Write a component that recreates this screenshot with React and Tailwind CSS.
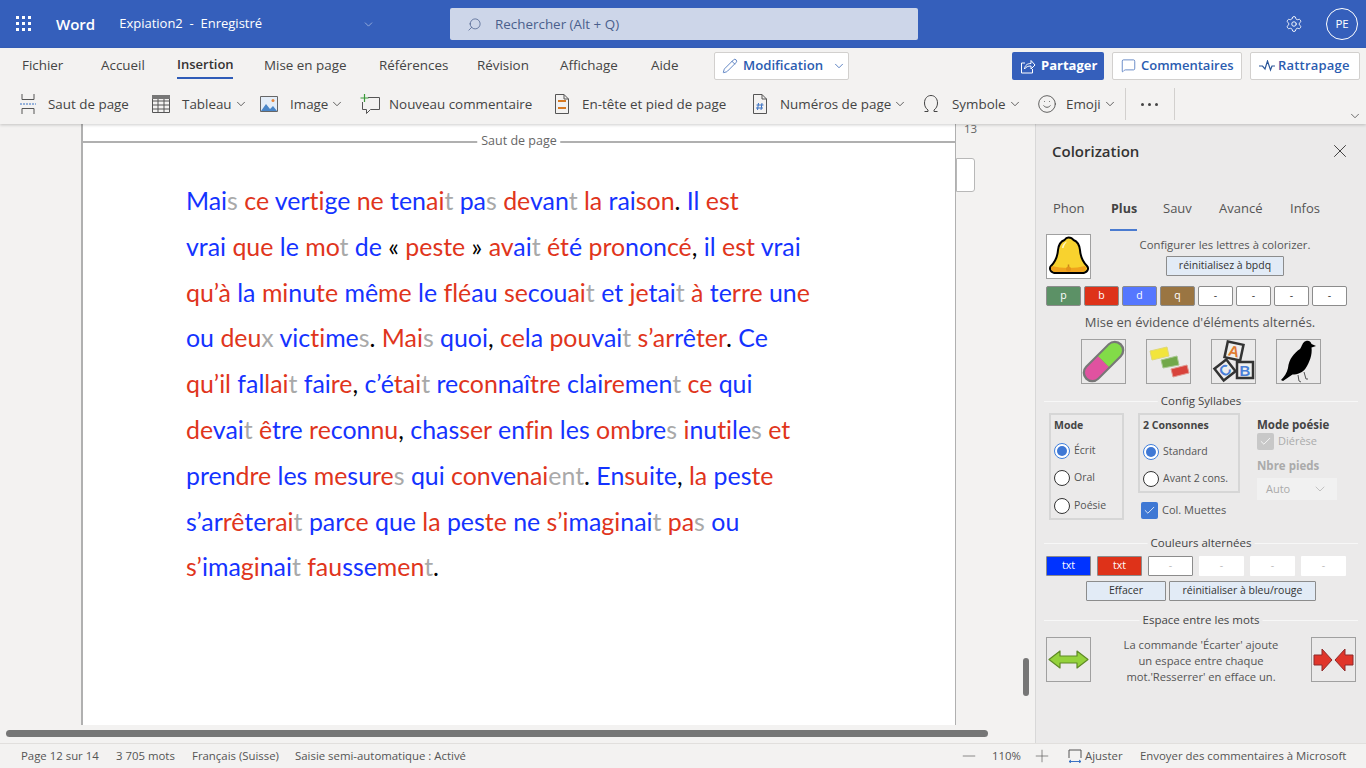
import React from 'react';
import { Search, Settings, Pencil, ChevronDown, MessageSquare, Smile, X, Minus, Plus, Check } from 'lucide-react';

const ui = "font-['Open_Sans',sans-serif]";

// each line: segments split by |, the first char of a segment is its colour
const LINES = [
  "bMai|gs |rce |bver|rti|bge |rne |bten|rai|gt |bpa|gs |rde|bvan|gt |rla |brai|rson|k. |bIl |rest",
  "bvrai |rque |ble |rmo|gt |bde |k« |rpeste |k» |rav|bai|gt |rét|bé |rpro|bnon|rcé|k, |bil |rest |bvrai",
  "rqu’à |bla |rmi|bnu|rte |bmê|rme |ble |rfl|ré|bau |rse|bcou|rai|gt |bet |rje|btai|gt |rà |bte|rrre |bun|re",
  "bou |rdeu|gx |bvic|rti|bme|gs|k. |rMai|gs |bquoi|k, |rce|bla |rpou|bvai|gt |rs’ar|brê|rter|k. |bCe",
  "rqu’il |bfal|rlai|gt |bfai|rre|k, |bc’é|rtai|gt |bre|rcon|bnaî|rtre |bclai|rre|bmen|gt |rce |bqui",
  "rde|bvai|gt |rê|btre |rre|bcon|rnu|k, |bchas|rser |ben|rfin |bles |rom|bbre|gs |ri|bnu|rti|ble|gs |ret",
  "bpren|rdre |bles |rme|bsu|rre|gs |bqui |rcon|bve|rnai|gent|k. |bEn|rsu|bite|k, |rla |bpes|rte",
  "bs’ar|rrê|bte|rrai|gt |bpar|rce |bque |rla |bpes|rte |bne |rs’i|bma|rgi|bnai|gt |rpa|gs |bou",
  "rs’|bima|rgi|bnai|gt |rfau|bsse|rmen|gt|k.",
];

const COLORS = { b: 'text-[#1433ff]', r: 'text-[#e0351c]', g: 'text-[#a9a9a9]', k: 'text-black' };

function Line({ text }) {
  return (
    <p className="h-[45.8px] leading-[45.8px] whitespace-pre [font-variant-ligatures:none]">
      {text.split('|').map((s, i) => (
        <span key={i} className={COLORS[s[0]]}>{s.slice(1)}</span>
      ))}
    </p>
  );
}

const Chevron = ({ className = '' }) => <ChevronDown size={14} strokeWidth={1.3} className={className} />;

function Cmd({ icon, label, chevron, width, gap }) {
  return (
    <div className="flex items-center shrink-0" style={{ width }}>
      {icon}
      <span style={{ marginLeft: gap }} className="whitespace-nowrap">{label}</span>
      {chevron && <Chevron className="ml-[2px] text-[#333]" />}
    </div>
  );
}

const PageBreakIcon = () => (
  <svg width="16" height="20" viewBox="0 0 16 20" fill="none" stroke="#555" className="shrink-0">
    <path d="M2 0v5.5h12V0M2 20v-5.5h12V20" />
    <path d="M0 10h16" stroke="#3a72c4" strokeDasharray="2 1" />
  </svg>
);
const TableIcon = () => (
  <svg width="18" height="18" viewBox="0 0 18 18" fill="none" stroke="#555" className="shrink-0">
    <path d="M.5.5h17v17H.5zM.5 6h17M.5 10h17M.5 14h17M6 4v14M12 4v14" />
    <path d="M0 0h18v4H0z" fill="#777" stroke="none" />
  </svg>
);
const ImageIcon = () => (
  <svg width="18" height="16" viewBox="0 0 18 16" className="shrink-0">
    <path d="M.5.5h17v15H.5z" fill="#e3edf8" stroke="#666" />
    <circle cx="13" cy="4.5" r="1.5" fill="#e8863a" />
    <path d="M1 15l5-7 4 5 3-3 4 5z" fill="#4a86c8" />
  </svg>
);
const CommentIcon = () => (
  <svg width="20" height="21" viewBox="0 0 20 21" fill="none" className="shrink-0">
    <path d="M8 3.500h11.500v12h-9l-4 4v-4h-4V8" stroke="#555" />
    <path d="M4.500 0v8M.5 4h8" stroke="#3a9a3a" strokeWidth="1.200" />
  </svg>
);
const HeaderIcon = () => (
  <svg width="14" height="20" viewBox="0 0 14 20" fill="none" className="shrink-0">
    <path d="M.5.500h8.500l4.500 4.500v14.500H.5zM9 .5V5h4.500" stroke="#555" />
    <path d="M3 6h8v2H3zM3 13h8v2H3z" fill="#d87a22" />
  </svg>
);
const NumberIcon = () => (
  <svg width="14" height="20" viewBox="0 0 14 20" fill="none" className="shrink-0">
    <path d="M.5.500h8.500l4.500 4.500v14.500H.5zM9 .5V5h4.500" stroke="#555" />
    <path d="M5.500 9l-1 7M9 9l-1 7M3.500 11h7M3 14h7" stroke="#3a72c4" />
  </svg>
);
const OmegaIcon = () => (
  <svg width="14" height="17" viewBox="0 0 14 17" fill="none" stroke="#444" className="shrink-0">
    <path d="M.5 16.500h3.500v-1.500C1.800 13.500.5 11 .5 8c0-4.500 2.800-7.500 6.500-7.500s6.500 3 6.500 7.500c0 3-1.300 5.500-3.500 7v1.500h3.500" />
  </svg>
);

const Waffle = () => (
  <svg width="16" height="16" viewBox="0 0 16 16" fill="#fff">
    {[1, 7, 13].map((y) => [1, 7, 13].map((x) => <rect key={`${x}-${y}`} x={x - 1} y={y - 1} width="3" height="3" />))}
  </svg>
);

const ShareIcon = () => (
  <svg width="16" height="16" viewBox="0 0 16 16" fill="none" stroke="#fff" className="shrink-0">
    <path d="M5 5H1.500v10h11v-4" />
    <path d="M4.500 11c.5-4 3-5.500 6.500-5.500V2.500l4 4.500-4 4V8c-3 0-5 .8-6.500 3z" />
  </svg>
);
const CatchupIcon = () => (
  <svg width="16" height="12" viewBox="0 0 16 12" fill="none" stroke="#2b579a" strokeWidth="1.200" className="shrink-0">
    <path d="M0 6h3.500l2.500 3 2.500-8 3 9 1.500-4H16" />
  </svg>
);

const Bell = () => (
  <svg width="43" height="43" viewBox="0 0 43 43">
    <path d="M21.500 2.500c2.500 0 4 1 5 2.500 4 1.500 6 5.500 6.500 10 .5 7 2 11 7 16 2.500 3 0 7-5 7H9c-5 0-7.500-4-5-7 5-5 6.500-9 7-16 .5-4.500 2.500-8.500 6.500-10 1-1.500 2.500-2.500 4-2.500z" fill="#f8d22e" stroke="#000" strokeWidth="2" strokeLinejoin="round" />
    <path d="M5 31c9 2.500 24 2.500 33 0 2.500 3 0 6-4 6H9c-4 0-6.500-3-4-6z" fill="#f0a31c" />
    <path d="M21.500 29.500v3" stroke="#c9851a" strokeWidth="1.500" />
    <circle cx="21.500" cy="34" r="2.500" fill="#e3931a" />
    <path d="M15 13c.3-3 2-5.500 5-6.500-1.500 2-3 4-3.500 6.500z" fill="#fff7c0" />
  </svg>
);
const Pill = () => (
  <svg width="43" height="43" viewBox="0 0 43 43">
    <g transform="rotate(-45 21.500 21.500)">
      <rect x="-4" y="12" width="51" height="19" rx="9.500" fill="#777" />
      <path d="M21.500 14H6a7.500 7.500 0 000 15h15.500z" fill="#e052a0" />
      <path d="M21.500 14H37a7.500 7.500 0 010 15H21.500z" fill="#82dc48" />
    </g>
  </svg>
);
const Bricks = () => (
  <svg width="43" height="43" viewBox="0 0 43 43">
    <path d="M3 11l17-4 2 9-17 4z" fill="#f2e53c" stroke="#e0d878" />
    <path d="M14 20l16-4 2 9-16 3z" fill="#72a84a" stroke="#a8c890" />
    <path d="M24 29l16-4 2 8-16 4z" fill="#d8433c" stroke="#e09890" />
  </svg>
);
const Block = ({ x, y, r, letter, color, size }) => (
  <g transform={`translate(${x} ${y}) rotate(${r})`}>
    <rect x={-size / 2} y={-size / 2} width={size} height={size} fill="#eee" stroke="#333" strokeWidth="2.500" />
    <text textAnchor="middle" y="5.500" fontSize="15" fontWeight="700" fontFamily="Liberation Sans, sans-serif" fill={color}>{letter}</text>
  </g>
);
const Blocks = () => (
  <svg width="43" height="43" viewBox="0 0 43 43">
    <Block x={22} y={11} r={12} letter="A" color="#e07a30" size={16} />
    <Block x={13} y={30} r={-38} letter="C" color="#4a7fd8" size={15} />
    <Block x={33} y={30} r={0} letter="B" color="#4a7fd8" size={16} />
  </svg>
);
const Bird = () => (
  <svg width="43" height="43" viewBox="0 0 43 43">
    <path d="M29 1c3-1 5 1 5.500 3L39 6l-4.500 1.500c1 7-2 15-6 21-3 4-8 6-13 6L6 41l-2-1c3-3 6-7 7-12 1-9 6-15 12-19 2-2 2-7 6-8z" fill="#000" />
    <path d="M21 35l1 6M22 41l2 1M27 32l2 7h2" stroke="#555" fill="none" />
  </svg>
);
const ArrowsOut = () => (
  <svg width="41" height="19" viewBox="0 0 41 19">
    <path d="M1 9.500L12 1v5h17V1l11 8.500L29 18v-5H12v5z" fill="#94d23c" stroke="#5f8a26" strokeWidth="1.200" strokeLinejoin="round" />
  </svg>
);
const ArrowsIn = () => (
  <svg width="41" height="24" viewBox="0 0 41 24">
    <path d="M1 7h8V1l10 11L9 23v-6H1z" fill="#e0352a" stroke="#8f2a2a" strokeWidth="1" />
    <path d="M40 7h-8V1L22 12l10 11v-6h8z" fill="#e0352a" stroke="#8f2a2a" strokeWidth="1" />
  </svg>
);

const IconBtn = ({ children, className = '' }) => (
  <div className={`w-[45px] h-[45px] shrink-0 border border-[#a0a0a0] flex items-center justify-center ${className}`}>{children}</div>
);

function Divider({ label, className = '' }) {
  return (
    <div className={`relative h-[1px] bg-[#f7f7f7] mx-[8px] ${className}`}>
      <span className="absolute left-1/2 -translate-x-1/2 -top-[9px] bg-[#ebeaea] px-[3px] leading-[18px] text-[11.500px] text-[#444] whitespace-nowrap">{label}</span>
    </div>
  );
}

function Radio({ checked, label, className = '' }) {
  return (
    <div className={`flex items-center h-[17px] ${className}`}>
      {checked ? (
        <span className="w-[16px] h-[16px] rounded-full border border-[#3f7fdc] bg-white flex items-center justify-center">
          <span className="w-[10px] h-[10px] rounded-full bg-[#3f78d4]" />
        </span>
      ) : (
        <span className="w-[16px] h-[16px] rounded-full border border-[#333] bg-white" />
      )}
      <span className="ml-[4px] text-[10.500px] text-[#555]">{label}</span>
    </div>
  );
}

const TinyBtn = ({ children, className = '' }) => (
  <div className={`h-[20px] border border-[#8c8c8c] bg-[#e2ebf6] rounded-[1px] flex items-center justify-center text-[10.500px] text-[#333] ${className}`}>{children}</div>
);

function Swatch({ label, className }) {
  return (
    <div className={`w-[35px] h-[20px] rounded-[2px] border border-[#8c8c8c] flex items-center justify-center text-[10.500px] ${className}`}>{label}</div>
  );
}

function AltSwatch({ label, className }) {
  return (
    <div className={`w-[45px] h-[20px] rounded-[1px] flex items-center justify-center text-[10.500px] ${className}`}>{label}</div>
  );
}

function Pane() {
  return (
    <aside className="w-[331px] shrink-0 h-full bg-[#ebeaea] border-l border-[#d8d8d8] text-[#444] overflow-hidden">
      <div className="flex items-center justify-between h-[20px] mt-[17px] pl-[16px] pr-[15px]">
        <span className="text-[15px] font-semibold text-[#333]">Colorization</span>
        <X size={22} strokeWidth={1} className="text-[#333]" />
      </div>
      <div className="flex mt-[38px] h-[20px] items-center text-[13px] text-[#555] pl-[17px]">
        <span className="w-[58px]">Phon</span>
        <span className="w-[52px] font-bold text-[12.500px] text-[#444]">Plus</span>
        <span className="w-[56px]">Sauv</span>
        <span className="w-[71px]">Avancé</span>
        <span>Infos</span>
      </div>
      <div className="w-[27px] h-[2px] bg-[#4a7bd0] ml-[74px] mt-[10px]" />

      <div className="flex mt-[3px] pl-[10px]">
        <IconBtn className="bg-white"><Bell /></IconBtn>
        <div className="w-[268px] flex flex-col items-center mt-[3px]">
          <span className="text-[11.300px] leading-[15px] text-[#555]">Configurer les lettres à colorizer.</span>
          <TinyBtn className="w-[118px] mt-[4px]">réinitialisez à bpdq</TinyBtn>
        </div>
      </div>

      <div className="flex gap-[3px] mt-[7px] pl-[10px]">
        <Swatch label="p" className="bg-[#5c9166] text-white" />
        <Swatch label="b" className="bg-[#de3219] text-white" />
        <Swatch label="d" className="bg-[#5577ff] text-white" />
        <Swatch label="q" className="bg-[#9a7542] text-white" />
        <Swatch label="-" className="bg-white text-[#333]" />
        <Swatch label="-" className="bg-white text-[#333]" />
        <Swatch label="-" className="bg-white text-[#333]" />
        <Swatch label="-" className="bg-white text-[#333]" />
      </div>

      <p className="text-center text-[13px] leading-[16px] mt-[8px] text-[#555] ml-[-1px] w-[330px]">Mise en évidence d'éléments alternés.</p>

      <div className="flex gap-[20px] mt-[9px] pl-[45px]">
        <IconBtn><Pill /></IconBtn>
        <IconBtn><Bricks /></IconBtn>
        <IconBtn><Blocks /></IconBtn>
        <IconBtn><Bird /></IconBtn>
      </div>

      <Divider label="Config Syllabes" className="mt-[17px]" />

      <div className="flex mt-[11px] pl-[13px] h-[108px] items-start">
        <div className="w-[75px] h-[107px] border-2 border-[#d6d6d6] pl-[3px] pt-[3px]">
          <div className="text-[10.500px] font-bold leading-[15px] text-[#444]">Mode</div>
          <Radio checked label="Écrit" className="mt-[9px]" />
          <Radio label="Oral" className="mt-[10px]" />
          <Radio label="Poésie" className="mt-[11px]" />
        </div>
        <div className="ml-[14px] w-[102px]">
          <div className="h-[80px] border-2 border-[#d6d6d6] pl-[3px] pt-[3px]">
            <div className="text-[10.500px] font-bold leading-[15px] text-[#444]">2 Consonnes</div>
            <Radio checked label="Standard" className="mt-[10px]" />
            <Radio label="Avant 2 cons." className="mt-[10px]" />
          </div>
          <div className="flex items-center mt-[9px] ml-[3px]">
            <span className="w-[17px] h-[17px] rounded-[2px] bg-[#3f78d4] flex items-center justify-center">
              <Check size={13} strokeWidth={1.500} className="text-white" />
            </span>
            <span className="ml-[4px] text-[11px] text-[#555]">Col. Muettes</span>
          </div>
        </div>
        <div className="ml-[17px] mt-[4px]">
          <div className="text-[11.500px] font-bold leading-[15px] text-[#444]">Mode poésie</div>
          <div className="flex items-center mt-[1px]">
            <span className="w-[17px] h-[17px] rounded-[2px] bg-[#c8c8c8] flex items-center justify-center">
              <Check size={13} strokeWidth={1.500} className="text-white" />
            </span>
            <span className="ml-[4px] text-[11px] text-[#aaa]">Diérèse</span>
          </div>
          <div className="text-[11.500px] font-bold leading-[15px] text-[#aaa] mt-[8px]">Nbre pieds</div>
          <div className="mt-[5px] w-[80px] h-[22px] bg-[#f1f1f1] flex items-center justify-between pl-[9px] pr-[9px] text-[11px] text-[#aaa]">
            <span>Auto</span>
            <ChevronDown size={16} strokeWidth={1} />
          </div>
        </div>
      </div>

      <Divider label="Couleurs alternées" className="mt-[22px]" />

      <div className="flex gap-[6px] mt-[12px] pl-[10px]">
        <AltSwatch label="txt" className="bg-[#0033ff] text-white border border-[#8c8c8c]" />
        <AltSwatch label="txt" className="bg-[#de3219] text-white border border-[#8c8c8c]" />
        <AltSwatch label="-" className="bg-white text-[#bbb] border border-[#8c8c8c]" />
        <AltSwatch label="-" className="bg-white text-[#bbb]" />
        <AltSwatch label="-" className="bg-white text-[#bbb]" />
        <AltSwatch label="-" className="bg-white text-[#bbb]" />
      </div>

      <div className="flex gap-[3px] mt-[5px] pl-[50px]">
        <TinyBtn className="w-[80px]">Effacer</TinyBtn>
        <TinyBtn className="w-[147px]">réinitialiser à bleu/rouge</TinyBtn>
      </div>

      <Divider label="Espace entre les mots" className="mt-[19px]" />

      <div className="flex mt-[16px] pl-[10px]">
        <IconBtn><ArrowsOut /></IconBtn>
        <p className="w-[220px] text-center text-[11.200px] leading-[16px] text-[#555]">
          La commande 'Écarter' ajoute<br />un espace entre chaque<br />mot.'Resserrer' en efface un.
        </p>
        <IconBtn><ArrowsIn /></IconBtn>
      </div>
    </aside>
  );
}

export default function App() {
  return (
    <div className={`w-[1366px] h-[768px] overflow-hidden flex flex-col bg-[#f3f2f1] text-[#333] ${ui}`}>
      {/* title bar */}
      <header className="h-[48px] shrink-0 bg-[#355fbb] flex items-center text-white relative">
        <div className="ml-[16px]"><Waffle /></div>
        <span className="ml-[24px] text-[15px] font-semibold">Word</span>
        <span className="ml-[24px] text-[13px] whitespace-pre">Expiation2  -  Enregistré</span>
        <ChevronDown size={13} strokeWidth={1.200} className="ml-[100px] text-[#c4d0ea]" />
        <div className="ml-[75px] w-[468px] h-[32px] bg-[#cdd6e9] rounded-[2px] flex items-center pl-[17px] text-[#4a5f8c] text-[13.400px]">
          <Search size={15} strokeWidth={1.200} className="-scale-x-100" />
          <span className="ml-[13px]">Rechercher (Alt + Q)</span>
        </div>
        <Settings size={18} strokeWidth={1.200} className="ml-[367px]" />
        <div className="ml-[23px] w-[32px] h-[32px] rounded-full border border-white flex items-center justify-center text-[11.500px]">PE</div>
      </header>

      {/* ribbon */}
      <div className="h-[76px] shrink-0 bg-[#f3f2f1] shadow-[0_1px_3px_rgba(0,0,0,0.2)] relative z-10 text-[13.400px] text-[#444]">
        <div className="h-[36px] flex items-center pl-[22px] pb-[2px] relative">
          <span className="w-[79px]">Fichier</span>
          <span className="w-[76px]">Accueil</span>
          <span className="w-[87px] relative font-semibold text-[13px] text-[#333]">
            Insertion
            <span className="absolute left-0 w-[56px] top-[22px] h-[2px] bg-[#2f5cb8]" />
          </span>
          <span className="w-[115px]">Mise en page</span>
          <span className="w-[98px]">Références</span>
          <span className="w-[83px]">Révision</span>
          <span className="w-[91px]">Affichage</span>
          <span className="w-[63px]">Aide</span>
          <div className="w-[135px] h-[28px] mt-[1px] bg-white border border-[#d2d0ce] rounded-[2px] flex items-center pl-[7px] text-[#2b5cb0] font-semibold text-[13.200px]">
            <Pencil size={16} strokeWidth={1.100} />
            <span className="ml-[5px]">Modification</span>
            <Chevron className="ml-[9px]" />
          </div>
          <div className="ml-[163px] w-[92px] h-[28px] mt-[1px] bg-[#355fbb] rounded-[2px] flex items-center pl-[8px] text-white font-bold text-[13px]">
            <ShareIcon />
            <span className="ml-[5px]">Partager</span>
          </div>
          <div className="ml-[8px] w-[130px] h-[28px] mt-[1px] bg-white border border-[#d2d0ce] rounded-[2px] flex items-center pl-[8px] text-[#2b5cb0] font-semibold text-[13px]">
            <MessageSquare size={15} strokeWidth={1.100} />
            <span className="ml-[5px]">Commentaires</span>
          </div>
          <div className="ml-[8px] w-[110px] h-[28px] mt-[1px] bg-white border border-[#d2d0ce] rounded-[2px] flex items-center pl-[8px] text-[#2b5cb0] font-semibold text-[13px] tracking-[0.2px]">
            <CatchupIcon />
            <span className="ml-[3px]">Rattrapage</span>
          </div>
        </div>
        <div className="h-[40px] flex items-center pl-[20px] relative">
          <Cmd icon={<PageBreakIcon />} label="Saut de page" gap={12} width={132} />
          <Cmd icon={<TableIcon />} label="Tableau" gap={12} chevron width={108} />
          <Cmd icon={<ImageIcon />} label="Image" gap={12} chevron width={100} />
          <Cmd icon={<CommentIcon />} label="Nouveau commentaire" gap={9} width={195} />
          <Cmd icon={<HeaderIcon />} label="En-tête et pied de page" gap={13} width={198} />
          <Cmd icon={<NumberIcon />} label="Numéros de page" gap={13} chevron width={171} />
          <Cmd icon={<OmegaIcon />} label="Symbole" gap={14} chevron width={113} />
          <Cmd icon={<Smile size={20} strokeWidth={1} />} label="Emoji" gap={9} chevron width={88} />
          <div className="w-px h-[32px] bg-[#d2d0ce]" />
          <div className="ml-[15px] w-[17px] flex justify-between">
            <span className="w-[3px] h-[3px] rounded-full bg-[#444]" />
            <span className="w-[3px] h-[3px] rounded-full bg-[#444]" />
            <span className="w-[3px] h-[3px] rounded-full bg-[#444]" />
          </div>
          <div className="ml-[16px] w-px h-[32px] bg-[#d2d0ce]" />
          <Chevron className="absolute right-[4px] bottom-[1px]" />
        </div>
      </div>

      {/* work area */}
      <div className="flex-1 flex min-h-0">
        <main className="flex-1 relative bg-[#f3f2f1] overflow-hidden pl-[81px] flex items-start">
          <div className="w-[875px] h-[601px] bg-white border-l-2 border-r border-[#b0b0b0] shrink-0">
            <div className="relative h-[2px] bg-[#b0b0b0] mt-[17px]">
              <span className="absolute left-1/2 -translate-x-1/2 -top-[9px] bg-white px-[4px] text-[12.500px] leading-[18px] text-[#666] whitespace-nowrap">Saut de page</span>
            </div>
            <div className="pl-[103px] pt-[35px] text-[24.900px] font-['Lato',sans-serif]">
              {LINES.map((l, i) => <Line key={i} text={l} />)}
            </div>
          </div>
          <div className="shrink-0">
            <div className="pl-[8px] text-[11.500px] leading-[10px] text-[#666]">13</div>
            <div className="mt-[24px] w-[19px] h-[34px] bg-white border border-[#b8b8b8] rounded-r-[3px]" />
          </div>
          <div className="absolute left-[6px] top-[606px] w-[982px] h-[7px] rounded-full bg-[#767676]" />
          <div className="absolute left-[1023px] top-[534px] w-[6px] h-[38px] rounded-full bg-[#767676]" />
        </main>
        <Pane />
      </div>

      {/* status bar */}
      <footer className="h-[25px] shrink-0 bg-[#f3f2f1] border-t border-[#e1dfdd] flex items-center text-[11.400px] text-[#555] pl-[21px] whitespace-nowrap">
        <span className="w-[95px]">Page 12 sur 14</span>
        <span className="w-[76px]">3 705 mots</span>
        <span className="w-[103px]">Français (Suisse)</span>
        <span className="w-[190px]">Saisie semi-automatique : Activé</span>
        <Minus size={20} strokeWidth={0.800} className="ml-[474px]" />
        <span className="ml-[13px] w-[40px]">110%</span>
        <Plus size={20} strokeWidth={0.800} />
        <svg width="14" height="14" viewBox="0 0 14 14" fill="none" className="ml-[16px]">
          <path d="M1 9V1h12v8" stroke="#555" />
          <path d="M1 12.500h12M1 12.500l2-1.500M1 12.500L3 14M13 12.500L11 11M13 12.500L11 14" stroke="#3a72c4" />
        </svg>
        <span className="ml-[3px] w-[55px]">Ajuster</span>
        <span>Envoyer des commentaires à Microsoft</span>
      </footer>
    </div>
  );
}
